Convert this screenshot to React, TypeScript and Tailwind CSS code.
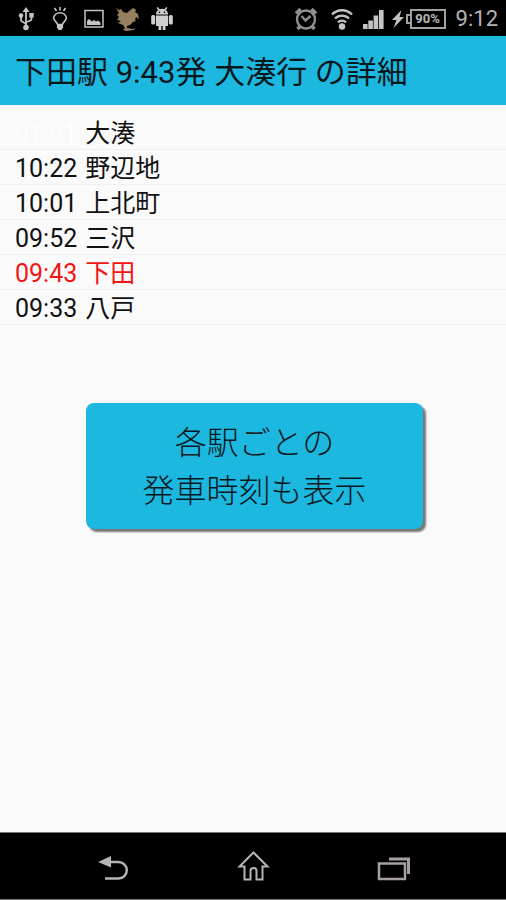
import React from 'react';

interface Stop {
  time: string;
  name: string;
  status?: 'current' | 'hidden';
}

const stops: Stop[] = [
  { time: '01:01', name: '大湊', status: 'hidden' },
  { time: '10:22', name: '野辺地' },
  { time: '10:01', name: '上北町' },
  { time: '09:52', name: '三沢' },
  { time: '09:43', name: '下田', status: 'current' },
  { time: '09:33', name: '八戸' },
];

const UsbIcon = () => (
  <svg className="w-4 h-6" viewBox="0 0 16 24" fill="none" stroke="#c4c4c4" strokeWidth="1.8">
    <path d="M8 3v17M3 9v4c0 2.500 5 2 5 5M13.500 8v4c0 2.500-5.500 2-5.500 4" />
    <path d="M8 0l3.500 5h-7z" fill="#c4c4c4" stroke="none" />
    <circle cx="3" cy="8.500" r="2.300" fill="#c4c4c4" stroke="none" />
    <path d="M11.300 6h4.400v4.400h-4.400z" fill="#c4c4c4" stroke="none" />
    <circle cx="8" cy="20.500" r="2.800" fill="#c4c4c4" stroke="none" />
  </svg>
);

const BulbIcon = () => (
  <svg className="w-4 h-6" viewBox="0 0 16 24" fill="none" stroke="#c4c4c4" strokeWidth="1.6">
    <path d="M8 0v3.500M2.500 1l2 3M13.500 1l-2 3" />
    <path d="M5.500 17.500c0-2-3.800-3.500-3.800-6.500a6.300 5.300 0 0 1 12.600 0c0 3-3.800 4.500-3.800 6.500z" />
    <path d="M5 17h6v3.500L9.500 23h-3L5 20.500z" fill="#c4c4c4" stroke="none" />
  </svg>
);

const PictureIcon = () => (
  <svg className="w-5 h-5" viewBox="0 0 20 20">
    <path d="M1 1.500h18v16.500H1z" fill="none" stroke="#c4c4c4" strokeWidth="1.5" />
    <path d="M3 16v-4l2-2 3 2.500 2-1.500 2 1.500 2-1 2.500 2V16z" fill="#c4c4c4" />
  </svg>
);

const BirdIcon = () => (
  <svg className="w-6 h-6" viewBox="0 0 24 24" fill="#94805f">
    <path d="M0 1l3 2 2-1 2 3 4 1 2-2 4-3 3 2-1 2 3 2 1 5-3-2-1 3 1 1-3 1-3 3-3 1 0 2 6 1 2-1-1 2-8 1-3-1 2-2-2-3-5-2 3-2-4-1 2-3-2-2 2-2z" />
  </svg>
);

const AndroidIcon = () => (
  <svg className="w-6 h-6" viewBox="0 0 24 24" fill="#cfcfcf">
    <path d="M6 7.500c0-2 .8-3.500 2.300-4.500L6.500 1l1.200-.9 2 2.100a8 8 0 0 1 4.600 0l2-2.100 1.200.9L15.700 3c1.500 1 2.300 2.500 2.300 4.500z" />
    <path d="M6 8.500h12V19h-2.500v4h-2.800v-4h-1.400v4H8.500v-4H6z" />
    <rect x="1.200" y="8" width="4" height="9.500" rx="1.500" />
    <rect x="18.800" y="8" width="4" height="9.500" rx="1.500" />
    <path d="M8.800 4.500h1.400v1.400H8.800zM13.800 4.500h1.400v1.400h-1.400z" fill="#000" />
  </svg>
);

const AlarmIcon = () => (
  <svg className="w-6 h-6" viewBox="0 0 24 24" fill="none" stroke="#8f8f8f" strokeWidth="2.400">
    <circle cx="12" cy="12.500" r="9" />
    <path d="M7.500 9l4 4.500 5-4.500" />
    <path d="M2 6.500L6.500 2M22 6.500L17.500 2M3.500 22l3-3M20.500 22l-3-3" strokeWidth="3.500" />
  </svg>
);

const WifiIcon = () => (
  <svg className="w-6 h-6" viewBox="0 0 24 24" fill="none" stroke="#c4c4c4" strokeWidth="2.400">
    <path d="M2 7.500a14 14 0 0 1 20 0M5 11.500a10 10 0 0 1 14 0M8 15.300a6 6 0 0 1 8 0" />
    <circle cx="12" cy="19.500" r="3.200" fill="#c4c4c4" stroke="none" />
  </svg>
);

const SignalIcon = () => (
  <svg className="w-6 h-5" viewBox="0 0 24 20" fill="#c4c4c4">
    <path d="M1 15h4.600v5H1zM6.300 11.500h4.600V20H6.300zM11.600 6.500h4.600V20h-4.600zM17 1h4.600v19H17z" />
  </svg>
);

const BoltIcon = () => (
  <svg className="w-3 h-5" viewBox="0 0 12 20" fill="#c4c4c4">
    <path d="M9.500 1L0 11h4.500L1.500 19 12 8H7.500z" />
  </svg>
);

const StatusBar = () => (
  <div className="h-9 bg-black flex items-center justify-between pl-[18px] pr-2 pt-[2px]">
    <div className="flex items-center">
      <UsbIcon />
      <div className="ml-[18px] flex"><BulbIcon /></div>
      <div className="ml-4 flex"><PictureIcon /></div>
      <div className="ml-3 flex"><BirdIcon /></div>
      <div className="ml-[10px] flex"><AndroidIcon /></div>
    </div>
    <div className="flex items-center">
      <AlarmIcon />
      <div className="ml-3 flex"><WifiIcon /></div>
      <div className="ml-2 flex"><SignalIcon /></div>
      <div className="ml-[6px] flex"><BoltIcon /></div>
      <div className="ml-[2px] flex items-center">
        <span className="w-1 h-[10px] border-2 border-r-0 border-[#a0a0a0]" />
        <span className="w-9 h-5 border-2 border-[#a0a0a0] flex items-center justify-center text-[13px] leading-4 font-bold text-[#b8b8b8]">
          90%
        </span>
      </div>
      <span className="ml-[10px] text-[22px] leading-6 text-[#b4b4b4]">9:12</span>
    </div>
  </div>
);

const StopRow: React.FC<{ stop: Stop }> = ({ stop }) => (
  <li
    className={`h-[35px] px-[15px] pt-[3px] flex items-center gap-2 border-b border-[#efefef] text-[25px] ${
      stop.status === 'current' ? 'text-[#f41414]' : 'text-[#111]'
    }`}
  >
    <span className={stop.status === 'hidden' ? 'text-[#fefefe]' : ''}>{stop.time}</span>
    <span>{stop.name}</span>
  </li>
);

const NavBar = () => (
  <nav className="h-[68px] bg-black border-y border-[#777] flex items-center justify-around px-[42px] pt-1">
    <button aria-label="戻る" className="w-9 h-9 flex items-center justify-center">
      <svg className="w-9 h-9" viewBox="0 0 36 36" fill="none" stroke="#b4b4b4" strokeWidth="2.500">
        <path d="M14 12h10.500a8 8 0 0 1 0 16.500H11" />
        <path d="M4 12l13-6v11.500z" fill="#b4b4b4" stroke="none" />
      </svg>
    </button>
    <button aria-label="ホーム" className="w-9 h-9 flex items-center justify-center">
      <svg className="w-9 h-9" viewBox="0 0 36 36" fill="none" stroke="#b4b4b4" strokeWidth="2">
        <path d="M18.500 2.500L4.500 16.500H9.500V29.500h6v-8.500a3 3 0 0 1 6 0v8.500h6V16.500h5z" />
      </svg>
    </button>
    <button aria-label="履歴" className="w-9 h-9 flex items-center justify-center">
      <svg className="w-9 h-9" viewBox="0 0 36 36" fill="none" stroke="#a8a0a0" strokeWidth="2.500">
        <path d="M3 13.500h26V29H3z" />
        <path d="M13 9h19.500v15" strokeWidth="3" />
      </svg>
    </button>
  </nav>
);

export default function App() {
  return (
    <div className="min-h-screen flex flex-col bg-[#fafafa] font-['Roboto','Noto_Sans_CJK_JP',sans-serif]">
      <StatusBar />

      <header className="h-[69px] px-[15px] pt-[5px] flex items-center bg-[#1cb8e0]">
        <h1 className="text-[31px] text-[#06181d] whitespace-nowrap">下田駅 9:43発 大湊行 の詳細</h1>
      </header>

      <main className="flex-1 pt-[10px] pb-8">
        <ul>
          {stops.map((stop) => (
            <StopRow key={stop.name} stop={stop} />
          ))}
        </ul>

        <div className="mt-[78px] pl-[3px]">
          <button className="block w-[67%] mx-auto pt-4 pb-[14px] rounded-lg bg-[#1cb8e0] shadow-[3px_3px_2px_#777] text-[32px] leading-[48px] font-light text-[#06181d]">
            各駅ごとの
            <br />
            発車時刻も表示
          </button>
        </div>
      </main>

      <NavBar />
    </div>
  );
}
